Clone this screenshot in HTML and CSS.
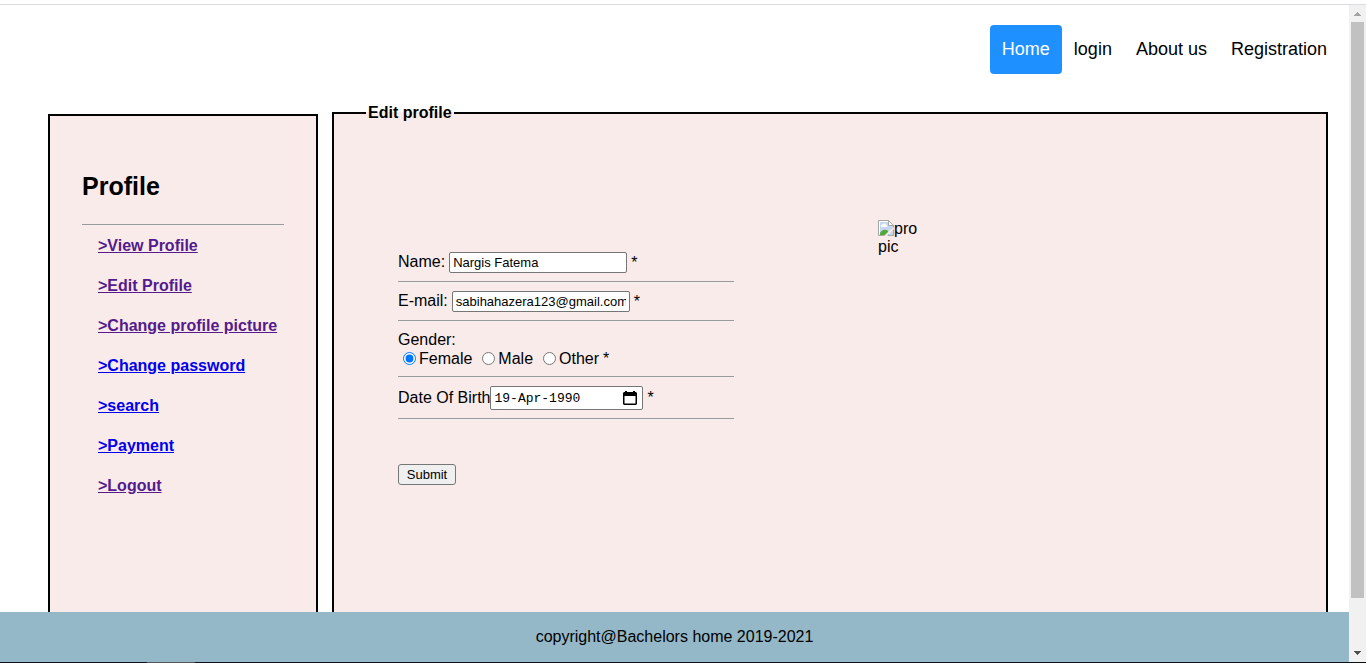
FILE: index.html
```html
<!DOCTYPE html>
<html lang="en">
<head>
<meta charset="utf-8">
<title>Edit profile</title>
<link rel="stylesheet" href="styles.css">
</head>
<body>
<div class="window">
  <div class="top-edge"></div>
  <div class="viewport">
    <div class="page">
      <header class="header">
        <nav class="nav">
          <a class="nav-link active" href="#">Home</a>
          <a class="nav-link" href="#">login</a>
          <a class="nav-link" href="#">About us</a>
          <a class="nav-link" href="#">Registration</a>
        </nav>
      </header>
      <main class="workspace">
        <aside class="sidebar">
          <h2 class="sidebar-title">Profile</h2>
          <hr class="rule">
          <nav class="menu">
            <a class="menu-link seen" href="#">&gt;View Profile</a>
            <a class="menu-link seen" href="#">&gt;Edit Profile</a>
            <a class="menu-link seen" href="#">&gt;Change profile picture</a>
            <a class="menu-link" href="#">&gt;Change password</a>
            <a class="menu-link" href="#">&gt;search</a>
            <a class="menu-link" href="#">&gt;Payment</a>
            <a class="menu-link seen" href="#">&gt;Logout</a>
          </nav>
        </aside>
        <fieldset class="panel">
          <legend class="legend">Edit profile</legend>
          <div class="panel-body">
            <form class="form">
              <div class="row"><label class="label" for="name">Name:</label><input class="field" id="name" type="text" value="Nargis Fatema"><span class="star">*</span></div>
              <hr class="rule">
              <div class="row"><label class="label" for="email">E-mail:</label><input class="field" id="email" type="text" value="sabihahazera123@gmail.com"><span class="star">*</span></div>
              <hr class="rule">
              <div class="gender" role="radiogroup" aria-labelledby="gender-label">
                <div id="gender-label">Gender:</div>
                <div class="choices">
                  <label class="choice"><input class="radio" type="radio" name="gender" checked>Female</label>
                  <label class="choice"><input class="radio" type="radio" name="gender">Male</label>
                  <label class="choice"><input class="radio" type="radio" name="gender">Other</label>
                  <span class="star">*</span>
                </div>
              </div>
              <hr class="rule">
              <div class="row date-row"><label for="dob">Date Of Birth</label><span class="date-box"><input class="date" id="dob" type="text" value="19-Apr-1990"><button class="picker" type="button" aria-label="Show calendar"><svg width="14" height="15" viewBox="0 0 14 15"><path d="M2 0h2v1h6V0h2v1h1l1 1v11l-1 1H1l-1-1V2l1-1h1z"/><path fill="#fff" d="M1.500 5h11v7.500h-11z"/></svg></button></span><span class="star">*</span></div>
              <hr class="rule">
              <button class="submit" type="button">Submit</button>
            </form>
            <div class="picture"><svg class="broken" width="16" height="16" viewBox="0 0 16 16" aria-hidden="true"><path fill="#c4d7f5" stroke="#a6a6a6" d="M.5.500h10l5 5v10H.5z"/><path fill="none" stroke="#fff" d="M1.500 14.500v-13h9"/><path fill="#fff" d="M3 6c0-1 1-2 2-1 0-2 3-2 3 0 1 0 2 1 1 2H3z"/><path fill="#53a83b" d="M2 15v-2c2-4 6-4 8-2l1 4z"/><path fill="#fff" stroke="#a6a6a6" d="M10.500.500v5h5z"/><path fill="#f9ebea" d="M16 7v2l-7 7H6l6-6 2-1z"/></svg>pro pic</div>
          </div>
        </fieldset>
      </main>
      <footer class="footer">copyright@Bachelors home 2019-2021</footer>
    </div>
    <div class="scrollbar" aria-hidden="true">
      <svg class="arrow" width="17" height="17" viewBox="0 0 17 17" shape-rendering="crispEdges"><path fill="#a3a3a3" d="M8 7h1v1h1v1h1v1h1v1H5v-1h1V9h1V8h1z"/></svg>
      <div class="track"><div class="thumb"></div></div>
      <svg class="arrow" width="17" height="17" viewBox="0 0 17 17" shape-rendering="crispEdges"><path fill="#505050" d="M5 6h7v1h-1v1h-1v1H9v1H8V9H7V8H6V7H5z"/></svg>
    </div>
  </div>
  <div class="bottom-edge"><div class="tab"></div></div>
</div>
</body>
</html>
```
FILE: styles.css
```css
* { box-sizing: border-box; }
body {
  margin: 0;
  background: #fff;
  color: #000;
  font: 16px/18px "Liberation Sans", Arial, sans-serif;
}
.window { display: flex; flex-direction: column; height: 100vh; overflow: hidden; }
.top-edge { height: 5px; flex: none; border-bottom: 1px solid #dadce0; }
.viewport { flex: 1; min-height: 0; display: flex; }
.page { flex: 1; min-width: 0; display: flex; flex-direction: column; }

.header { padding: 20px 10px 30px; }
.nav { display: flex; justify-content: flex-end; }
.nav-link {
  padding: 12px;
  border-radius: 4px;
  color: #000;
  font-size: 18px;
  line-height: 25px;
  text-decoration: none;
}
.nav-link.active { background: #1e90ff; color: #fff; }

.workspace {
  flex: 1;
  min-height: 0;
  display: flex;
  gap: 14px;
  padding: 0 21px 0 48px;
}
.sidebar {
  flex: none;
  width: 270px;
  margin-top: 10px;
  padding: 56px 32px 0;
  border: 2px solid #000;
  border-bottom: 0;
  background: #f9ebea;
}
.sidebar-title { margin: 0 0 24px; font-size: 25px; line-height: 28px; }
.rule {
  width: 100%;
  height: 2px;
  margin: 0;
  border: 0;
  border-top: 1px solid #9a9a9a;
  border-bottom: 1px solid #f4eeee;
}
.menu {
  display: flex;
  flex-direction: column;
  align-items: flex-start;
  gap: 20px;
  padding: 10px 0 0 16px;
}
.menu-link { color: #0000ee; font-weight: bold; line-height: 20px; white-space: nowrap; }
.menu-link.seen { color: #551a8b; }

.panel {
  flex: 1;
  min-width: 0;
  margin: 0;
  padding: 0 32px;
  border: 2px solid #000;
  border-bottom: 0;
  background: #f9ebea;
}
.legend { padding: 0 2px; font-weight: bold; line-height: 18px; }
.panel-body { display: flex; gap: 144px; padding: 98px 32px 0; }
.form { display: flex; flex-direction: column; gap: 8px; width: 336px; padding-top: 32px; }
.row { display: flex; align-items: center; height: 21px; line-height: 20px; }
.date-row { height: 24px; }
.label { margin-right: 4px; }
.row .label { height: 21px; }
.field {
  width: 178px;
  height: 21px;
  padding: 1px 3px;
  border: 1px solid #767676;
  border-radius: 2px;
  background: #fff;
  color: #000;
  font: 13px "Liberation Sans", Arial, sans-serif;
}
.star { margin-left: 4px; }
.gender { line-height: 19px; }
.choices { display: flex; }
.choice { display: flex; align-items: center; margin-right: 8px; }
.choice:last-of-type { margin-right: 0; }
.radio { width: 13px; height: 13px; margin: 0 3px 0 2px; }
.choice:first-child .radio { margin-left: 5px; }
.date-box {
  display: flex;
  align-items: center;
  width: 153px;
  height: 24px;
  padding: 0 5px 0 3px;
  border: 1px solid #767676;
  border-radius: 2px;
  background: #fff;
}
.date {
  flex: 1;
  min-width: 0;
  padding: 0;
  border: 0;
  background: none;
  font: 13px "Liberation Mono", "Courier New", monospace;
}
.picker { display: flex; padding: 0; border: 0; background: none; }
.submit {
  align-self: flex-start;
  width: 58px;
  height: 21px;
  margin-top: 36px;
  padding: 0;
  border: 1px solid #767676;
  border-radius: 3px;
  background: #efefef;
  color: #000;
  font: 13px "Liberation Sans", Arial, sans-serif;
}
.picture { width: 40px; height: 40px; }
.broken { vertical-align: top; }

.footer {
  flex: none;
  height: 50px;
  background: #95b8c8;
  line-height: 50px;
  text-align: center;
}

.scrollbar { flex: none; width: 17px; display: flex; flex-direction: column; background: #f1f1f1; }
.arrow { flex: none; }
.track { flex: 1; padding: 0 2px; }
.thumb { height: 92.5%; background: #c1c1c1; }
.bottom-edge { flex: none; height: 1px; background: #0d1117; }
.tab { width: 48px; height: 1px; margin-left: 147px; background: #555; }
```
